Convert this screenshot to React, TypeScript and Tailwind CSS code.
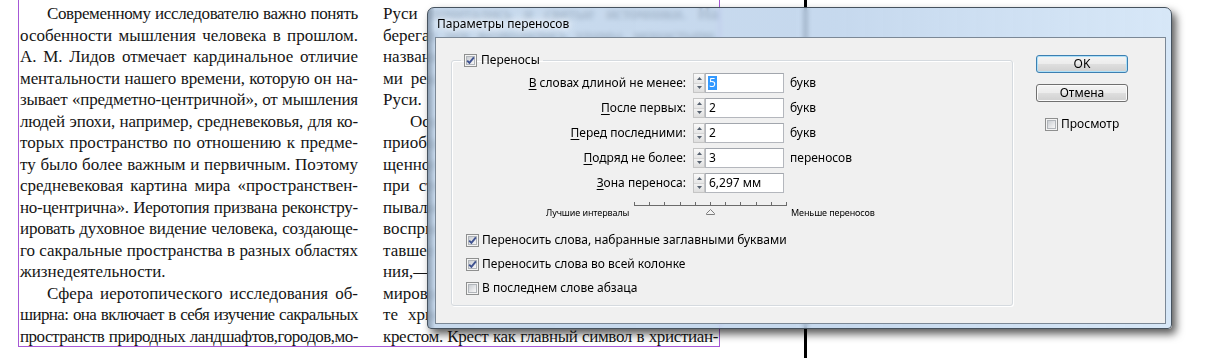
import React, { useLayoutEffect, useRef, useState } from "react";

type Line = { t: string; indent?: boolean; last?: boolean; gap?: string };

const col1: Line[] = [
  { t: "Современному исследователю важно понять", indent: true },
  { t: "особенности мышления человека в прошлом." },
  { t: "А. М. Лидов отмечает кардинальное отличие" },
  { t: "ментальности нашего времени, которую он на-" },
  { t: "зывает «предметно-центричной», от мышления" },
  { t: "людей эпохи, например, средневековья, для ко-" },
  { t: "торых пространство по отношению к предме-" },
  { t: "ту было более важным и первичным. Поэтому" },
  { t: "средневековая картина мира «пространствен-" },
  { t: "но-центрична». Иеротопия призвана реконстру-" },
  { t: "ировать духовное видение человека, создающе-" },
  { t: "го сакральные пространства в разных областях" },
  { t: "жизнедеятельности.", last: true },
  { t: "Сфера иеротопического исследования об-", indent: true },
  { t: "ширна: она включает в себя изучение сакральных" },
  { t: "пространств природных ландшафтов,городов,мо-" },
];

/* second column: the dialog window covers most of it, only the line starts show */
const col2: Line[] = [
  { t: "Руси почитались и святые источники. На" },
  { t: "берегах рек возводились храмы, монастыри," },
  { t: "названия", last: true },
  { t: "ми реки", last: true, gap: "gap-[8px]" },
  { t: "Руси.", last: true },
  { t: "Особое", indent: true, last: true },
  { t: "приобщения", last: true },
  { t: "щенного", last: true },
  { t: "при стечении", last: true, gap: "gap-[9px]" },
  { t: "пывались", last: true },
  { t: "восприятие", last: true },
  { t: "тавшее", last: true },
  { t: "ния,—", last: true },
  { t: "мировоззрение", last: true },
  { t: "те христиан", last: true, gap: "gap-[10px]" },
  { t: "крестом. Крест как главный символ в христиан-" },
];

function JLine({ l }: { l: Line }) {
  const ref = useRef<HTMLDivElement>(null);
  const [ls, setLs] = useState(0);
  useLayoutEffect(() => {
    const el = ref.current;
    if (!el || l.last) return;
    const spans = Array.from(el.children) as HTMLElement[];
    const sum = spans.reduce((a, s) => a + s.getBoundingClientRect().width, 0);
    const pl = parseFloat(getComputedStyle(el).paddingLeft) || 0;
    const avail = el.clientWidth - pl;
    const need = sum + (spans.length - 1) * 4.5 - avail;
    if (need > 0) {
      const chars = l.t.replace(/ /g, "").length;
      setLs(-need / chars);
    }
  }, [l]);
  return (
    <div
      ref={ref}
      style={ls ? { letterSpacing: `${ls}px` } : undefined}
      className={
        "flex h-[21.5px] whitespace-nowrap " +
        (l.last ? "justify-start " + (l.gap ?? "gap-[5px]") + " " : "justify-between ") +
        (l.indent ? "pl-[27px]" : "")
      }
    >
      {l.t.split(" ").map((w, j) => (
        <span key={j}>{w}</span>
      ))}
    </div>
  );
}

function Column({ lines, className }: { lines: Line[]; className: string }) {
  return (
    <div className={"pt-[3px] font-['Liberation_Serif',serif] text-[17px] leading-[21.5px] text-[#151515] " + className}>
      {lines.map((l, i) => (
        <JLine key={i} l={l} />
      ))}
    </div>
  );
}

function CheckBox({ checked }: { checked?: boolean }) {
  return (
    <span className="relative block h-[13px] w-[13px] shrink-0 border border-[#8e8f8f] bg-[#f4f4f4]">
      <span className="absolute left-[1px] top-[1px] h-[9px] w-[9px] border border-[#b1b5ba] bg-[linear-gradient(135deg,#c9cdd2_0%,#e6e7e9_60%,#f7f7f7_100%)]" />
      {checked && (
        <svg className="absolute left-0 top-0" width="11" height="11" viewBox="0 0 11 11">
          <path d="M2.2 5.6 L4.4 7.9 L8.9 2.3" fill="none" stroke="#3f5290" strokeWidth="1.9" />
        </svg>
      )}
    </span>
  );
}

function Spin() {
  return (
    <div className="flex h-[20px] w-[12px] shrink-0 flex-col border border-[#c5c5c5] bg-[#f4f4f4]">
      <div className="flex flex-1 items-center justify-center border-b border-[#d6d6d6] bg-[linear-gradient(to_bottom,#fafafa,#e6e6e6)]">
        <svg width="5" height="3" viewBox="0 0 5 3">
          <path d="M0 3 L2.5 0 L5 3 Z" fill="#55606e" />
        </svg>
      </div>
      <div className="flex flex-1 items-center justify-center bg-[linear-gradient(to_bottom,#f2f2f2,#dedede)]">
        <svg width="5" height="3" viewBox="0 0 5 3">
          <path d="M0 0 L5 0 L2.5 3 Z" fill="#55606e" />
        </svg>
      </div>
    </div>
  );
}

function Field({
  label,
  value,
  unit,
  selected,
}: {
  label: string;
  value: string;
  unit: string;
  selected?: boolean;
}) {
  const first = label.charAt(0);
  const rest = label.slice(1);
  return (
    <div className="flex h-[20px] items-center">
      <div className="w-[234px] text-right">
        <span className="underline decoration-1 underline-offset-[2px]">{first}</span>
        {rest}
      </div>
      <div className="ml-[7px]">
        <Spin />
      </div>
      <div className="flex h-[20px] w-[79px] items-center border border-[#b4b7bd] border-t-[#a2a6ad] bg-white pl-[2px]">
        {selected ? (
          <span className="bg-[#3399ff] px-[1px] leading-[14px] text-white">{value}</span>
        ) : (
          <span className="pl-[1px]">{value}</span>
        )}
      </div>
      {unit && <div className="ml-[6px]">{unit}</div>}
    </div>
  );
}

function Slider() {
  const ticks = Array.from({ length: 11 }, (_, i) => Math.round(1 + i * 15.2) + 0.5);
  return (
    <svg width="154" height="17" viewBox="0 0 154 17" className="block shrink-0">
      <line x1="1" y1="6.5" x2="153" y2="6.5" stroke="#6b6b6b" />
      {ticks.map((x, i) => (
        <line key={i} x1={x} y1="3" x2={x} y2="7" stroke="#6b6b6b" />
      ))}
      <path d="M77.5 10.5 L81.5 14.5 L81.5 15.5 L73.5 15.5 L73.5 14.5 Z" fill="#f2f2f2" stroke="#7d7d7d" />
    </svg>
  );
}

function CheckRow({ checked, label }: { checked?: boolean; label: string }) {
  return (
    <div className="flex h-[16px] items-center gap-[3px]">
      <CheckBox checked={checked} />
      <span>{label}</span>
    </div>
  );
}

function Button({ children, primary }: { children: React.ReactNode; primary?: boolean }) {
  return (
    <div
      className={
        "flex h-[18px] w-[92px] items-center justify-center rounded-[3px] border bg-[linear-gradient(to_bottom,#f4f4f4_0%,#ececec_48%,#dedede_52%,#d0d0d0_100%)] " +
        (primary
          ? "border-[#3c7fb1] shadow-[inset_0_0_0_1px_#aee0f8]"
          : "border-[#707070] shadow-[inset_0_0_0_1px_#fbfbfb]")
      }
    >
      {children}
    </div>
  );
}

function Dialog() {
  return (
    <div className="absolute left-[427px] top-[7px] flex h-[322px] w-[745px] flex-col rounded-b-[4px] rounded-t-[7px] border border-[#46525e] bg-[linear-gradient(90deg,rgba(130,150,172,0.92)_0px,rgba(186,208,232,0.8)_7px,rgba(182,206,233,0.78)_55%,rgba(208,227,246,0.85)_100%)] shadow-[4px_5px_9px_rgba(0,0,0,0.65)] backdrop-blur-[2.5px] font-['Noto_Sans',sans-serif] text-[12px] leading-[16px] text-black">
      <div className="flex h-[29px] items-center pl-[9px] pt-[3px] [text-shadow:0_0_6px_#fff,0_0_10px_#fff]">
        Параметры переносов
      </div>
      <div className="mb-[4px] ml-[7px] mr-[5px] flex flex-1 items-start border border-[#7b8896] bg-[#f0f0f0] pl-[15px] pt-[14px]">
        <fieldset className="w-[562px] rounded-[3px] border border-[#d5dadf] pb-[9px] shadow-[inset_1px_1px_0_#ffffff,1px_1px_0_#ffffff]">
          <legend className="ml-[9px] px-[3px]">
            <span className="flex h-[16px] items-center gap-[4px]">
              <CheckBox checked />
              <span>Переносы</span>
            </span>
          </legend>
          <div className="mt-[5px] flex flex-col gap-[5px]">
            <Field label="В словах длиной не менее:" value="5" unit="букв" selected />
            <Field label="После первых:" value="2" unit="букв" />
            <Field label="Перед последними:" value="2" unit="букв" />
            <Field label="Подряд не более:" value="3" unit="переносов" />
            <Field label="Зона переноса:" value="6,297 мм" unit="" />
          </div>
          <div className="ml-[94px] mt-[6px] flex items-start text-[9px] leading-[12px] tracking-[-0.1px]">
            <span className="mt-[8px] w-[84px] whitespace-nowrap">Лучшие интервалы</span>
            <span className="ml-[3px]">
              <Slider />
            </span>
            <span className="ml-[4px] mt-[8px] whitespace-nowrap">Меньше переносов</span>
          </div>
          <div className="ml-[14px] mt-[13px] flex flex-col gap-[8px]">
            <CheckRow checked label="Переносить слова, набранные заглавными буквами" />
            <CheckRow checked label="Переносить слова во всей колонке" />
            <CheckRow label="В последнем слове абзаца" />
          </div>
        </fieldset>
        <div className="ml-[23px] mt-[3px] flex flex-col">
          <Button primary>OK</Button>
          <div className="mt-[11px]">
            <Button>Отмена</Button>
          </div>
          <div className="ml-[9px] mt-[14px] flex h-[16px] items-center gap-[3px]">
            <CheckBox />
            <span>Просмотр</span>
          </div>
        </div>
      </div>
    </div>
  );
}

export default function App() {
  return (
    <div className="relative h-[358px] w-[1208px] overflow-hidden bg-white">
      <div className="flex h-full">
        <div className="ml-[18px] flex h-[347px] w-[702px] shrink-0 border-b border-l border-r border-[#a658d6]">
          <Column lines={col1} className="ml-[1px] w-[338px] shrink-0" />
          <Column lines={col2} className="ml-[25px] w-[335px] shrink-0" />
        </div>
        <div className="ml-[84px] h-full w-[3px] shrink-0 bg-black" />
      </div>
      <Dialog />
    </div>
  );
}
